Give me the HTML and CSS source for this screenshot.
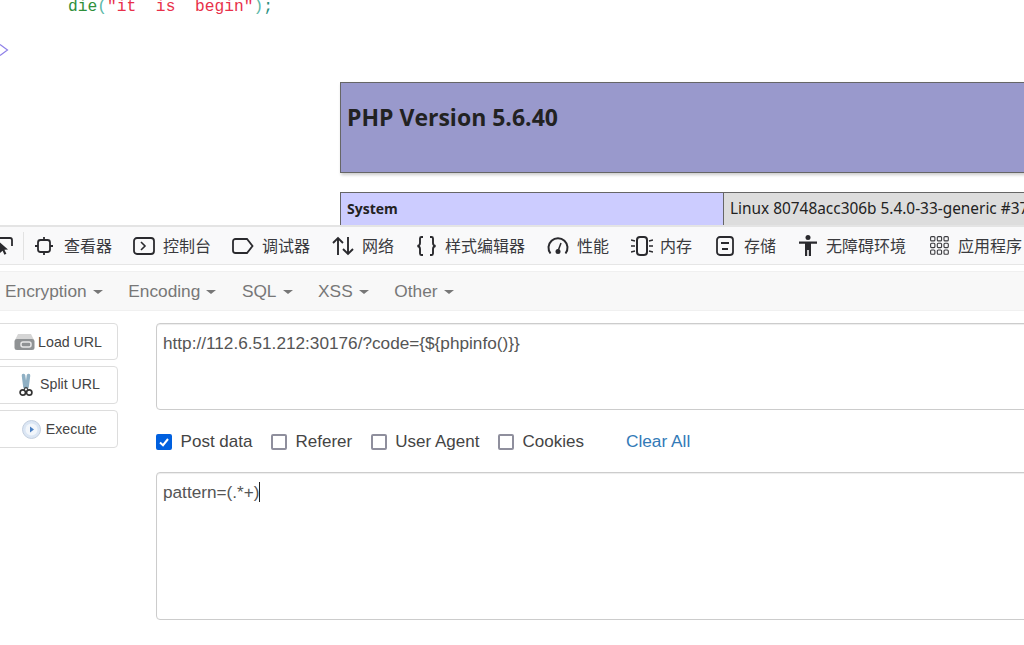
FILE: index.html
```html
<!DOCTYPE html>
<html lang="zh-CN">
<head>
<meta charset="utf-8">
<title>HackBar</title>
<link rel="stylesheet" href="styles.css">
</head>
<body>
<section class="page">
  <div class="code"><span class="fn">die</span><span class="paren">(</span><span class="str">"it  is  begin"</span><span class="paren">)</span><span class="semi">;</span></div>
  <svg class="chev" width="10" height="16" viewBox="0 0 10 16"><path d="M0 2.500 7.500 8 0 13.500" fill="none" stroke="#8f80e8" stroke-width="1.200"/></svg>
  <div class="php">
    <div class="php-head"><h1>PHP Version 5.6.40</h1></div>
    <div class="php-row"><div class="php-key">System</div><div class="php-val">Linux 80748acc306b 5.4.0-33-generic #37~18.04.1-Ubuntu SMP</div></div>
  </div>
</section>
<nav class="tools">
  <svg class="pick" width="14" height="22" viewBox="0 0 14 22"><path d="M0 3h10a2 2 0 0 1 2 2v6" fill="none" stroke="#2a2a2e" stroke-width="1.800"/><path d="M0 7.500l8 7-3.600.3 2 4-2 .9-1.800-4L0 18z" fill="#2a2a2e"/></svg>
  <span class="sep"></span>
  <div class="tool t1"><svg width="18" height="18" viewBox="0 0 18 18"><rect x="3" y="3" width="12" height="12" rx="2.500" fill="none" stroke="#2a2a2e" stroke-width="1.800"/><path d="M9 0v3M9 15v3M0 9h3M15 9h3" stroke="#2a2a2e" stroke-width="1.800"/></svg><span>查看器</span></div>
  <div class="tool t2"><svg width="22" height="18" viewBox="0 0 22 18"><rect x="1" y="1" width="20" height="16" rx="3" fill="none" stroke="#2a2a2e" stroke-width="1.800"/><path d="M8 5l4 4-4 4" fill="none" stroke="#2a2a2e" stroke-width="1.600"/></svg><span>控制台</span></div>
  <div class="tool t3"><svg width="22" height="16" viewBox="0 0 22 16"><path d="M3.500 1H15l5.500 7-5.500 7H3.500A2.500 2.500 0 0 1 1 12.500v-9A2.500 2.500 0 0 1 3.500 1z" fill="none" stroke="#2a2a2e" stroke-width="1.800"/></svg><span>调试器</span></div>
  <div class="tool t4"><svg width="22" height="20" viewBox="0 0 22 20"><path d="M6 19V2M1 7l5-5 5 5M16 1v17M11 13l5 5 5-5" fill="none" stroke="#2a2a2e" stroke-width="1.900"/></svg><span>网络</span></div>
  <div class="tool t5"><svg width="21" height="20" viewBox="0 0 21 20"><path d="M7 1H5.500Q4 1 4 2.500V7Q4 9.500 1.500 10 4 10.500 4 13v4.500Q4 19 5.500 19H7M14 1h1.500Q17 1 17 2.500V7Q17 9.500 19.500 10 17 10.500 17 13v4.500Q17 19 15.500 19H14" fill="none" stroke="#2a2a2e" stroke-width="1.900"/></svg><span>样式编辑器</span></div>
  <div class="tool t6"><svg width="22" height="20" viewBox="0 0 22 20"><path d="M3.500 17.500A9.500 9.500 0 1 1 18.500 17.500" fill="none" stroke="#2a2a2e" stroke-width="2"/><circle cx="11" cy="15.500" r="2.500" fill="#2a2a2e"/><path d="M11 15l3-8" stroke="#2a2a2e" stroke-width="1.500"/></svg><span>性能</span></div>
  <div class="tool t7"><svg width="22" height="20" viewBox="0 0 22 20"><rect x="6" y="1" width="10" height="18" rx="3" fill="none" stroke="#2a2a2e" stroke-width="2"/><path d="M0 4l4 1M0 10h4M0 16l4-1M22 4l-4 1M22 10h-4M22 16l-4-1" stroke="#2a2a2e" stroke-width="1.300"/></svg><span>内存</span></div>
  <div class="tool t8"><svg width="18" height="20" viewBox="0 0 18 20"><rect x="1" y="1" width="16" height="18" rx="3" fill="none" stroke="#2a2a2e" stroke-width="1.800"/><path d="M5 7h8M6 13h6" stroke="#2a2a2e" stroke-width="1.800"/></svg><span>存储</span></div>
  <div class="tool t9"><svg width="20" height="21" viewBox="0 0 20 21"><circle cx="10" cy="2.500" r="2.500" fill="#2a2a2e"/><path d="M1 6.500h18v2.200h-6V21h-2.200v-6H9.200v6H7V8.700H1z" fill="#2a2a2e"/></svg><span>无障碍环境</span></div>
  <div class="tool t10"><svg width="19" height="19" viewBox="0 0 19 19" fill="none" stroke="#3c3c40" stroke-width="1.100"><rect x=".6" y=".6" width="4.300" height="4.300" rx="1"/><rect x="7.300" y=".6" width="4.300" height="4.300" rx="1"/><rect x="14" y=".6" width="4.300" height="4.300" rx="1"/><rect x=".6" y="7.300" width="4.300" height="4.300" rx="1"/><rect x="7.300" y="7.300" width="4.300" height="4.300" rx="1"/><rect x="14" y="7.300" width="4.300" height="4.300" rx="1"/><rect x=".6" y="14" width="4.300" height="4.300" rx="1"/><rect x="7.300" y="14" width="4.300" height="4.300" rx="1"/><rect x="14" y="14" width="4.300" height="4.300" rx="1"/></svg><span>应用程序</span></div>
</nav>
<main class="hackbar">
  <div class="menu">
    <span class="menu-item">Encryption<i class="caret"></i></span>
    <span class="menu-item">Encoding<i class="caret"></i></span>
    <span class="menu-item">SQL<i class="caret"></i></span>
    <span class="menu-item">XSS<i class="caret"></i></span>
    <span class="menu-item">Other<i class="caret"></i></span>
  </div>
  <div class="body">
    <div class="actions">
      <button class="btn b-load"><svg width="21" height="19" viewBox="0 0 21 19"><path d="M4 2h13l3 6H1z" fill="#d5d5d5"/><rect x="0.500" y="7" width="20" height="11" rx="2.500" fill="#8f9294"/><rect x="7" y="10" width="10" height="5" rx="2" fill="none" stroke="#e8e8e8" stroke-width="1.500"/></svg>Load URL</button>
      <button class="btn b-split"><svg width="14" height="24" viewBox="0 0 14 24"><path d="M4.500 2.500 6 14M9.500 2.500 8 14" stroke="#8fb0c4" stroke-width="3.600" stroke-linecap="round"/><path d="M6.500 14 5 17M7.500 14 9 17" stroke="#444" stroke-width="1.200"/><circle cx="3.800" cy="19.500" r="2.700" fill="none" stroke="#333" stroke-width="1.700"/><circle cx="10.200" cy="19.500" r="2.700" fill="none" stroke="#333" stroke-width="1.700"/></svg><span class="split-label">Split URL</span></button>
      <button class="btn b-exec"><svg width="19" height="19" viewBox="0 0 19 19"><circle cx="9.500" cy="9.500" r="9" fill="#dbe6f4" stroke="#c3cfdf"/><circle cx="9.500" cy="9.500" r="6" fill="#f2f6fb"/><path d="M8 6.500l4 3-4 3z" fill="#4a80c4"/></svg>Execute</button>
    </div>
    <div class="forms">
      <div class="field url">http://112.6.51.212:30176/?code={${phpinfo()}}</div>
      <div class="checks">
        <label class="check"><span class="box on"><svg width="12" height="12" viewBox="0 0 12 12"><path d="M2 6.500 5 9.200 10 3" fill="none" stroke="#fff" stroke-width="2"/></svg></span>Post data</label>
        <label class="check"><span class="box"></span>Referer</label>
        <label class="check"><span class="box"></span>User Agent</label>
        <label class="check"><span class="box"></span>Cookies</label>
        <a class="clear">Clear All</a>
      </div>
      <div class="field post">pattern=(.*+)<span class="cursor"></span></div>
    </div>
  </div>
</main>
</body>
</html>
```
FILE: styles.css
```css
* { box-sizing: border-box; }
html, body { margin: 0; padding: 0; }
body {
  width: 1024px;
  height: 645px;
  overflow: hidden;
  background: #fff;
  font-family: "Liberation Sans", "Noto Sans CJK SC", sans-serif;
  color: #555;
}
.page {
  height: 225px;
  overflow: hidden;
  position: relative;
}
.code {
  position: absolute;
  left: 68px;
  top: -3px;
  font: 16.270px/20px "Liberation Mono", monospace;
  white-space: pre;
}
.fn { color: #2f8f3a; }
.paren { color: #5ab8a8; }
.str { color: #e8304a; }
.semi { color: #2a8f80; }
.chev { position: absolute; left: 0; top: 42px; }
.php {
  position: absolute;
  left: 340px;
  top: 82px;
  width: 760px;
  font-family: "Open Sans", "Noto Sans", sans-serif;
  color: #222;
}
.php-head {
  height: 91px;
  background: #9999cc;
  border: 1px solid #666;
  box-shadow: 1px 2px 3px #ccc;
  padding: 18px 6px;
}
.php-head h1 {
  margin: 0;
  font-size: 23px;
  line-height: 33px;
  font-weight: 700;
}
.php-row {
  margin-top: 19px;
  height: 34px;
  display: flex;
  border: 1px solid #666;
  font-size: 14px;
}
.php-key {
  width: 383px;
  flex: none;
  background: #ccccff;
  border-right: 1px solid #666;
  padding: 6px;
  font-weight: 700;
  line-height: 20px;
}
.php-val {
  flex: 1;
  background: #dddddd;
  padding: 6px;
  font-family: "Noto Sans", sans-serif;
  font-size: 15.400px;
  line-height: 20px;
  white-space: nowrap;
}
.tools {
  height: 40px;
  background: #f9f9fa;
  border-top: 2px solid #e4e4e4;
  border-bottom: 1px solid #e6e6e6;
  position: relative;
  font-size: 16px;
  color: #3a3a3e;
}
.pick { position: absolute; left: 0; top: 8px; }
.sep { position: absolute; left: 23px; top: 5px; width: 1px; height: 28px; background: #e2e2e2; }
.tool {
  position: absolute;
  top: 0;
  height: 37px;
  display: flex;
  align-items: center;
  gap: 8px;
  white-space: nowrap;
}
.tool span { margin-top: -2px; }
.t1 { left: 35px; gap: 11px; }
.t2 { left: 133px; }
.t3 { left: 232px; }
.t4 { left: 332px; }
.t5 { left: 416px; }
.t6 { left: 547px; }
.t7 { left: 631px; gap: 7px; }
.t8 { left: 716px; gap: 10px; }
.t9 { left: 798px; }
.t10 { left: 930px; gap: 9px; }
.hackbar { height: 380px; }
.menu {
  margin-top: 6px;
  height: 40px;
  background: #f8f8f8;
  border: 1px solid #f0f0f0;
  border-left: 0;
  border-right: 0;
  display: flex;
  align-items: center;
  gap: 25.600px;
  padding-left: 5px;
  font-size: 17.300px;
  color: #777;
}
.menu-item { display: inline-flex; align-items: center; }
.caret {
  margin-left: 6px;
  margin-top: 2px;
  border-top: 4px solid #777;
  border-left: 5px solid transparent;
  border-right: 5px solid transparent;
}
.body { display: flex; padding-top: 12px; }
.actions {
  width: 156px;
  flex: none;
  display: flex;
  flex-direction: column;
  gap: 6px;
}
.btn {
  margin-left: -12px;
  width: 130px;
  height: 37px;
  background: #fff;
  border: 1px solid #ddd;
  border-radius: 4px;
  display: flex;
  align-items: center;
  justify-content: flex-end;
  gap: 3px;
  padding: 0 15px 0 0;
  font: 14.200px "Liberation Sans", sans-serif;
  color: #444;
}
.b-split { height: 38px; padding-right: 17px; gap: 7px; }
.split-label { margin-top: -2px; }
.b-exec { height: 38px; padding-right: 20px; gap: 5px; }
.forms { flex: 1; min-width: 0; }
.field {
  width: 900px;
  background: #fff;
  border: 1px solid #ccc;
  border-radius: 4px;
  box-shadow: inset 0 1px 1px rgba(0,0,0,.075);
  padding: 8px 6px;
  font-size: 17.200px;
  line-height: 22px;
  color: #555;
}
.url { height: 87px; }
.post { height: 148px; }
.cursor { display: inline-block; width: 1px; height: 20px; margin-left: -1px; background: #222; vertical-align: -4px; }
.checks {
  height: 62px;
  padding-top: 2px;
  display: flex;
  align-items: center;
  font-size: 17px;
  color: #444;
}
.check { display: inline-flex; align-items: center; gap: 8.600px; margin-right: 18.500px; }
.box {
  width: 16px;
  height: 16px;
  border: 2px solid #8f8f9d;
  border-radius: 2px;
  background: #fff;
  display: inline-flex;
  align-items: center;
  justify-content: center;
}
.box.on { background: #0060df; border-color: #0060df; }
.clear { margin-left: 23.500px; margin-top: -2px; color: #337ab7; font-size: 17.300px; }
```
